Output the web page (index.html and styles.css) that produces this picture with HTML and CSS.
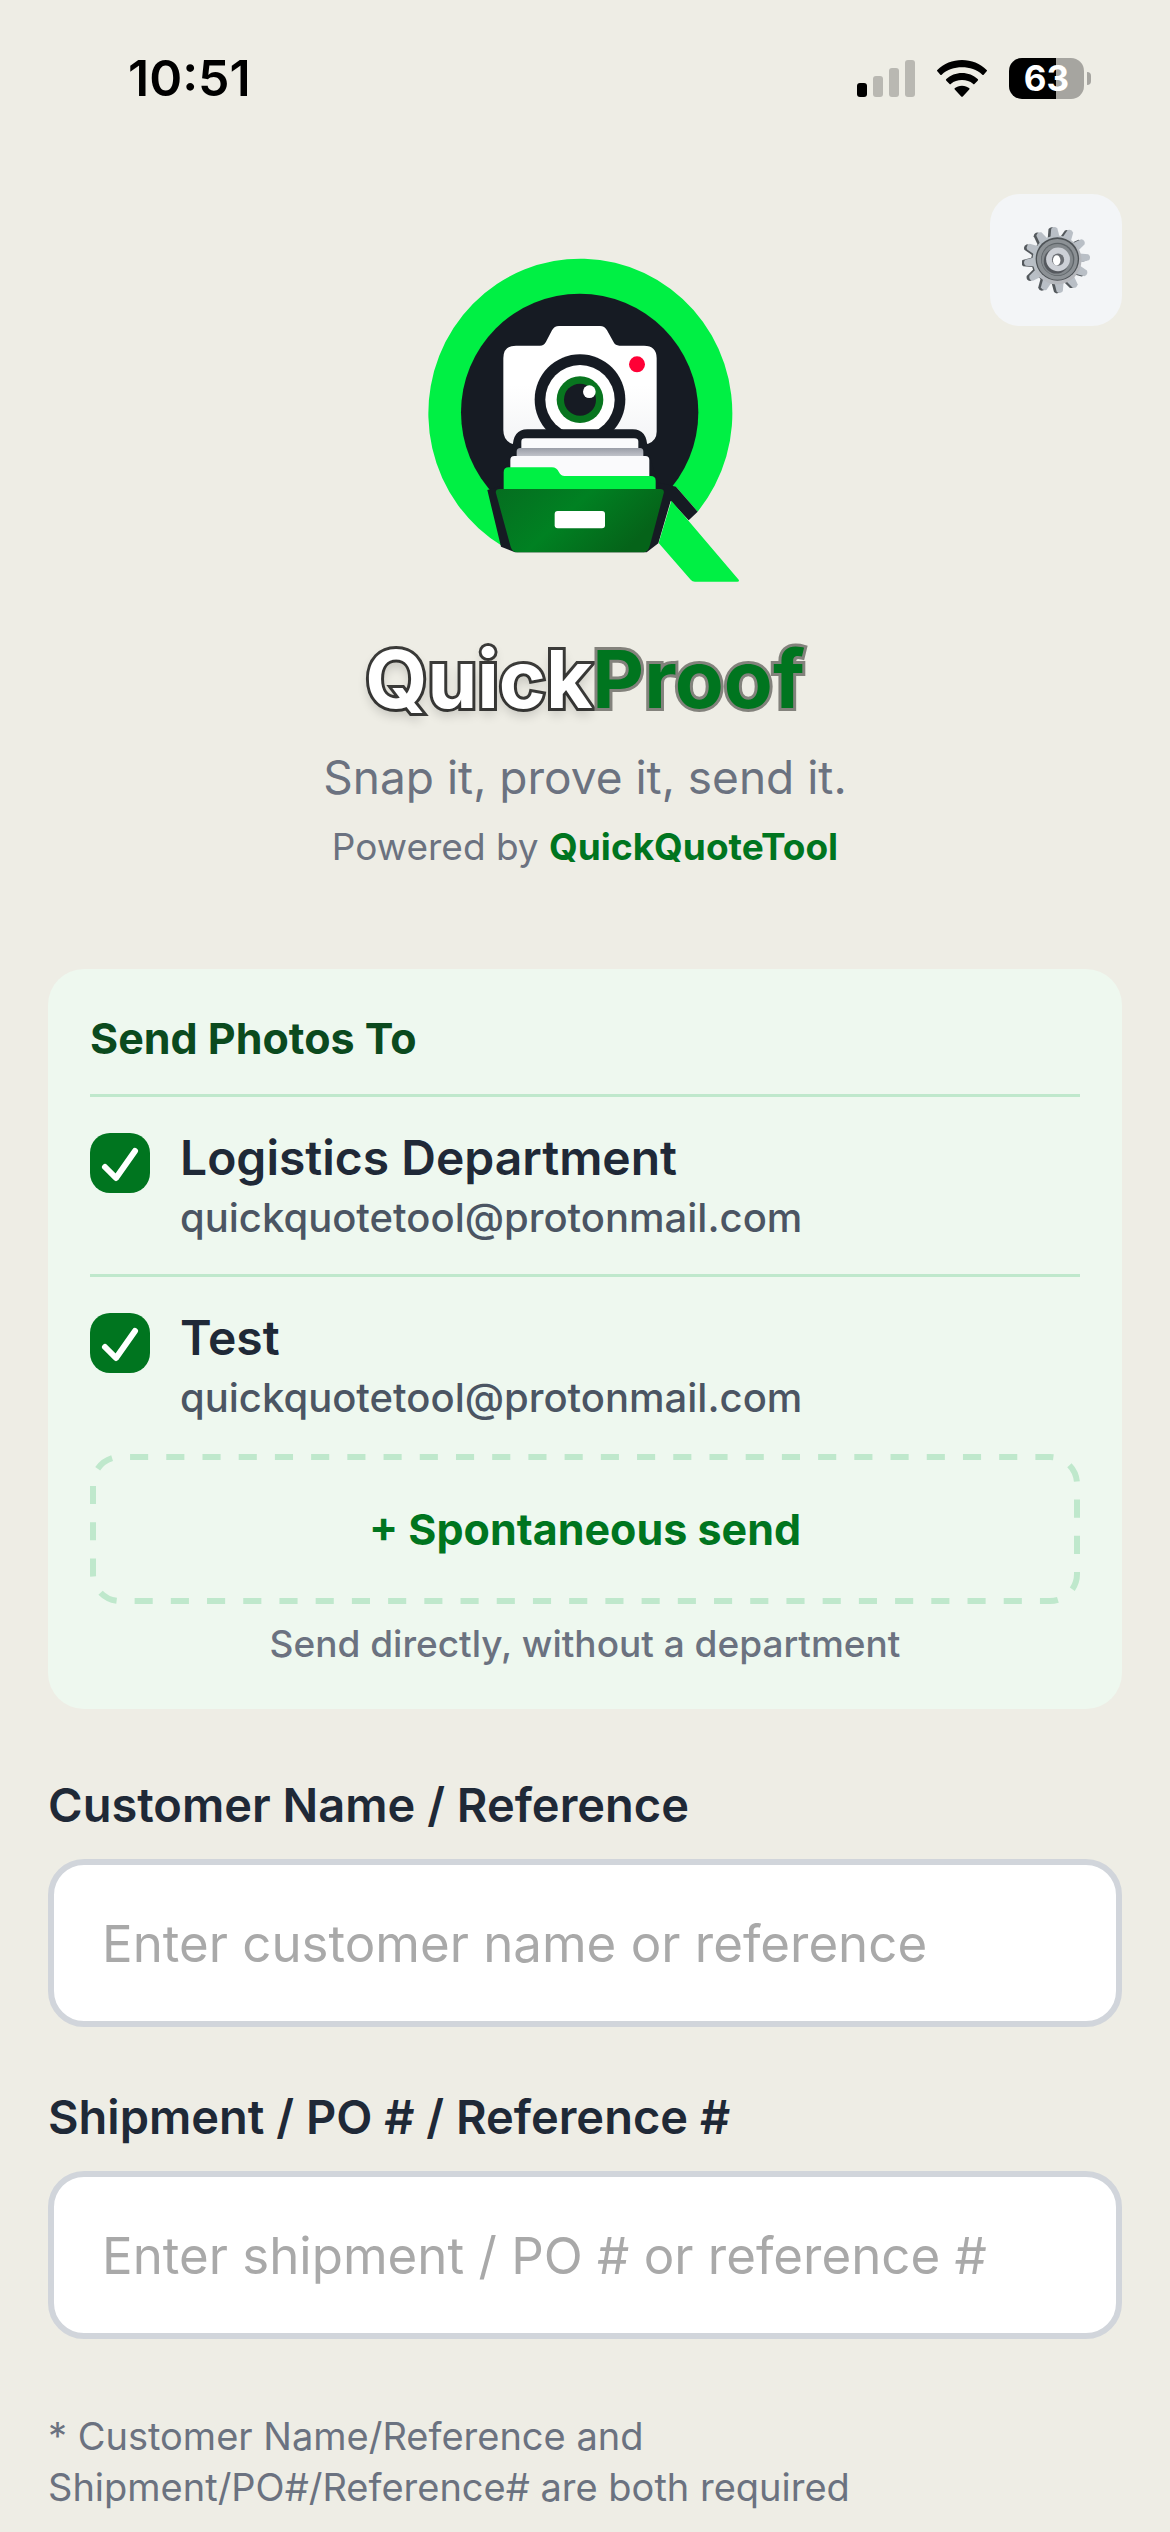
FILE: index.html
```html
<!DOCTYPE html>
<html lang="en">
<head>
    <meta charset="UTF-8">
    <meta name="viewport" content="width=device-width, initial-scale=1">
    <title>QuickProof</title>
    <link rel="stylesheet" href="styles.css">
</head>
<body>
<div class="status">
    <span class="time">10:51</span>
    <div class="status-icons">
        <svg class="signal" viewBox="0 0 58 37" aria-hidden="true">
            <rect x="0" y="23" width="10" height="14" rx="3"/>
            <g opacity="0.22">
                <rect x="16" y="16" width="10" height="21" rx="3"/>
                <rect x="32" y="8" width="10" height="29" rx="3"/>
                <rect x="48" y="0" width="10" height="37" rx="3"/>
            </g>
        </svg>
        <svg class="wifi" viewBox="0 0 150 111" aria-hidden="true">
            <path d="M75 0C103 0 130 11 149 30Q151 32 149 34L140 44Q138 46 136 44C119 29 98 22 75 22S31 29 14 44Q12 46 10 44L1 34Q-1 32 1 30C20 11 47 0 75 0Z"/>
            <path d="M75 39C93 39 110 46 122 57Q125 59 122 62L113 71Q110 74 108 71C99 64 88 60 75 60S51 64 42 71Q40 74 37 71L28 62Q25 59 28 57C40 46 57 39 75 39Z"/>
            <path d="M75 77C84 77 91 80 96 84Q99 86 96 89L78 109Q75 112 72 109L54 89Q51 86 54 84C59 80 66 77 75 77Z"/>
        </svg>
        <span class="battery">63</span>
    </div>
</div>

<div class="page">
    <header class="header">
        <svg class="logo" viewBox="75 75 960 990" role="img" aria-label="QuickProof logo">
            <defs>
                <linearGradient id="cam" x1="0" y1="0" x2="0" y2="1">
                    <stop offset="0.5" stop-color="#fff"/>
                    <stop offset="1" stop-color="#f3f4f6"/>
                </linearGradient>
                <linearGradient id="sheet" x1="0" y1="0" x2="0" y2="1">
                    <stop offset="0" stop-color="#9a9da7"/>
                    <stop offset="1" stop-color="#c6c8cf"/>
                </linearGradient>
                <linearGradient id="drawer" x1="0" y1="0" x2="1" y2="0.4">
                    <stop offset="0" stop-color="#056e20"/>
                    <stop offset="0.5" stop-color="#008122"/>
                    <stop offset="1" stop-color="#056319"/>
                </linearGradient>
            </defs>
            <!--ring and tail-->
            <path fill="#00f044" d="M310 950A456 464 0 1 1 893 845L828 770L540 900Z"/>
            <circle cx="539" cy="547" r="356" fill="#161b23"/>
            <path fill="#161b23" d="M828 770L893 845L866 871L812 813L775 940L740 967H345L303 950L262 780L540 700Z"/>
            <path fill="#00f044" d="M814 812L1016 1049Q1019 1055 1012 1055H885Q877 1055 872 1049L776 939Z"/>
            <!--camera-->
            <path fill="url(#cam)" d="M348 347H420Q432 347 438 335L456 301Q463 288 477 288H600Q614 288 621 301L641 337Q646 347 658 347H732Q770 347 770 385V605Q770 632 743 642L700 610H380L338 642Q310 632 310 600V385Q310 347 348 347Z"/>
            <circle cx="711" cy="403" r="24" fill="#ff0036"/>
            <circle cx="540" cy="509" r="136" fill="#161b23"/>
            <circle cx="540" cy="509" r="104" fill="#fff"/>
            <circle cx="540" cy="509" r="70" fill="#08751f"/>
            <circle cx="540" cy="509" r="48" fill="#161b23"/>
            <circle cx="568" cy="485" r="19" fill="#fff"/>
            <!--files in the drawer-->
            <path fill="#161b23" d="M338 655Q338 598 382 598H698Q742 598 742 655L780 780H295Z"/>
            <path fill="#fafafc" d="M364 656V635Q364 625 376 625H703Q715 625 715 635V656Z"/>
            <path fill="url(#sheet)" d="M350 682V665Q350 654 361 654H720Q730 654 730 665V682Z"/>
            <path fill="#fafafc" d="M331 740V690Q331 678 343 678H736Q748 678 748 690V740Z"/>
            <path fill="#00f044" d="M311 777V727Q311 712 326 712H456Q470 712 477 727Q482 738 494 738H752Q767 738 767 752V777Z"/>
            <path fill="url(#drawer)" d="M300 777H780Q794 777 791 790L750 945Q744 967 732 967H352Q337 967 332 950L288 790Q285 777 300 777Z"/>
            <rect x="464" y="843" width="151" height="52" rx="9" fill="#fff"/>
        </svg>
        <button class="settings" type="button" aria-label="Settings">
            <svg viewBox="0 0 200 200" aria-hidden="true">
                <defs>
                    <linearGradient id="steel" x1="0" y1="0" x2="1" y2="1">
                        <stop offset="0" stop-color="#b9c2c9"/>
                        <stop offset="1" stop-color="#b4b4b8"/>
                    </linearGradient>
                    <path id="tooth" d="M85 42L91 7Q100 -2 109 7L115 42Z"/>
                    <g id="teeth">
                        <use href="#tooth" transform="rotate(-5 100 100)"/>
                        <use href="#tooth" transform="rotate(25 100 100)"/>
                        <use href="#tooth" transform="rotate(55 100 100)"/>
                        <use href="#tooth" transform="rotate(85 100 100)"/>
                        <use href="#tooth" transform="rotate(115 100 100)"/>
                        <use href="#tooth" transform="rotate(145 100 100)"/>
                        <use href="#tooth" transform="rotate(175 100 100)"/>
                        <use href="#tooth" transform="rotate(205 100 100)"/>
                        <use href="#tooth" transform="rotate(235 100 100)"/>
                        <use href="#tooth" transform="rotate(265 100 100)"/>
                        <use href="#tooth" transform="rotate(295 100 100)"/>
                        <use href="#tooth" transform="rotate(325 100 100)"/>
                    </g>
                </defs>
                <g fill="#53585c" transform="translate(-5 1)">
                    <use href="#teeth"/>
                    <circle cx="100" cy="100" r="68"/>
                </g>
                <g fill="#b9bfc6" transform="translate(3 0)">
                    <use href="#teeth"/>
                    <circle cx="100" cy="100" r="72" fill="url(#steel)"/>
                </g>
                <circle cx="104" cy="97" r="64" fill="#4d5256"/>
                <circle cx="104" cy="98" r="60" fill="#8c9195"/>
                <circle cx="105" cy="98" r="49" fill="#5f6569"/>
                <circle cx="104" cy="99" r="46" fill="#84898d"/>
                <circle cx="101" cy="103" r="37" fill="#55595e"/>
                <circle cx="106" cy="98" r="35" fill="#cdd0d6"/>
                <circle cx="106" cy="99" r="18" fill="#6b6e73"/>
                <ellipse cx="102" cy="101" rx="11" ry="15" fill="#fff"/>
            </svg>
        </button>
    </header>

    <div class="intro">
        <h1 class="brand"><span class="quick">Quick</span><span class="proof">Proof</span></h1>
        <p class="tagline">Snap it, prove it, send it.</p>
        <p class="powered">Powered by <a href="#">QuickQuoteTool</a></p>
    </div>

    <section class="card">
        <h2>Send Photos To</h2>
        <label class="dept">
            <input type="checkbox" checked>
            <span class="dept-text">
                <span class="dept-name">Logistics Department</span>
                <span class="dept-mail">quickquotetool@protonmail.com</span>
            </span>
        </label>
        <label class="dept">
            <input type="checkbox" checked>
            <span class="dept-text">
                <span class="dept-name">Test</span>
                <span class="dept-mail">quickquotetool@protonmail.com</span>
            </span>
        </label>
        <button class="send" type="button">
            <svg class="dashes" aria-hidden="true"><rect pathLength="2196"/></svg>
            + Spontaneous send
        </button>
        <p class="hint">Send directly, without a department</p>
    </section>

    <form class="form">
        <div class="field">
            <label for="customer">Customer Name / Reference</label>
            <input id="customer" type="text" placeholder="Enter customer name or reference">
        </div>
        <div class="field">
            <label for="shipment">Shipment / PO # / Reference #</label>
            <input id="shipment" type="text" placeholder="Enter shipment / PO # or reference #">
        </div>
        <p class="note">* Customer Name/Reference and<br>Shipment/PO#/Reference# are both required</p>
    </form>
</div>
</body>
</html>
```
FILE: styles.css
```css
* {
    margin: 0;
    padding: 0;
    box-sizing: border-box;
}

body {
    background-color: #eeede5;
    color: #1f2937;
    font-family: Inter, "Liberation Sans", sans-serif;
}

button, input {
    font-family: inherit;
}

svg {
    display: block;
}

/* status bar */
.status {
    display: flex;
    align-items: center;
    justify-content: space-between;
    height: 156px;
    padding: 0 86px 0 128px;
    color: #000;
}

.time {
    font-size: 50px;
    font-weight: 600;
}

.status-icons {
    display: flex;
    align-items: center;
    gap: 22px;
}

.signal {
    width: 58px;
    height: 37px;
}

.wifi {
    width: 50px;
    height: 37px;
}

.battery {
    position: relative;
    width: 75px;
    height: 41px;
    border-radius: 13px;
    background: linear-gradient(to right, #000 63%, #a6a5a0 63%);
    color: #fff;
    font-size: 35px;
    font-weight: 700;
    line-height: 41px;
    text-align: center;
}

.battery::after {
    content: "";
    position: absolute;
    top: 14px;
    right: -7px;
    width: 4px;
    height: 13px;
    border-radius: 0 4px 4px 0;
    background-color: #a6a5a0;
}

/* page */
.page {
    padding: 38px 48px 0;
}

.header {
    display: grid;
    grid-template-columns: 132px 1fr 132px;
    align-items: start;
}

.logo {
    grid-column: 2;
    justify-self: center;
    width: 320px;
    height: 330px;
    margin-top: 61px;
}

.settings {
    display: flex;
    align-items: center;
    justify-content: center;
    width: 132px;
    height: 132px;
    border: none;
    border-radius: 30px;
    background-color: #f3f5f7;
}

.settings svg {
    width: 68px;
    height: 68px;
}

.intro {
    margin-top: 46px;
    text-align: center;
}

.brand {
    font-size: 80px;
    font-weight: 700;
    line-height: 96px;
}

.quick {
    color: #fff;
    -webkit-text-stroke: 6px #3c3c3a;
    paint-order: stroke fill;
    text-shadow: 0 6px 12px rgba(0, 0, 0, 0.2);
}

.proof {
    color: #00751f;
    -webkit-text-stroke: 6px #83827c;
    paint-order: stroke fill;
}

.tagline {
    margin-top: 20px;
    color: #6b7280;
    font-size: 46px;
    line-height: 60px;
}

.powered {
    margin-top: 16px;
    color: #6b7280;
    font-size: 37px;
    line-height: 48px;
}

.powered a {
    color: #00751f;
    font-weight: 700;
    text-decoration: none;
}

/* recipients */
.card {
    margin-top: 98px;
    padding: 45px 42px 41px;
    border-radius: 36px;
    background-color: #eef8ef;
}

.card h2 {
    padding-bottom: 32px;
    color: #0b4a1e;
    font-size: 43px;
    font-weight: 700;
    line-height: 48px;
}

.dept {
    display: flex;
    gap: 30px;
    padding: 33px 0 32px;
    border-top: 3px solid #bfe8cc;
}

.dept input {
    appearance: none;
    flex: none;
    width: 60px;
    height: 60px;
    margin-top: 3px;
    border-radius: 20px;
}

.dept input:checked {
    background: #00751f url("data:image/svg+xml,%3Csvg xmlns='http://www.w3.org/2000/svg' viewBox='0 0 60 60'%3E%3Cpath d='M15 34L26 45L45 18' fill='none' stroke='white' stroke-width='6' stroke-linecap='round' stroke-linejoin='round'/%3E%3C/svg%3E") center / 60px 60px no-repeat;
}

.dept-text {
    display: flex;
    flex-direction: column;
    gap: 8px;
}

.dept-name {
    font-size: 48px;
    font-weight: 600;
    line-height: 56px;
}

.dept-mail {
    color: #4b5563;
    font-size: 40px;
    font-weight: 500;
    line-height: 48px;
}

.send {
    position: relative;
    display: block;
    width: 100%;
    height: 150px;
    border: none;
    background: none;
    color: #00751f;
    font-size: 43px;
    font-weight: 700;
}

.dashes {
    position: absolute;
    top: 0;
    left: 0;
    width: 100%;
    height: 100%;
}

.dashes rect {
    x: 3px;
    y: 3px;
    width: calc(100% - 6px);
    height: calc(100% - 6px);
    rx: 27px;
    fill: none;
    stroke: #bfe8cc;
    stroke-width: 6px;
    stroke-dasharray: 18 18;
    stroke-dashoffset: -10;
}

.hint {
    margin-top: 16px;
    color: #6b7280;
    font-size: 37px;
    font-weight: 500;
    line-height: 48px;
    text-align: center;
}

/* form */
.form {
    margin-top: 68px;
}

.field {
    margin-bottom: 62px;
}

.field label {
    display: block;
    margin-bottom: 26px;
    font-size: 47px;
    font-weight: 600;
    line-height: 56px;
}

.field input {
    display: block;
    width: 100%;
    height: 168px;
    padding: 0 48px;
    border: 6px solid #d1d5db;
    border-radius: 36px;
    background-color: #fff;
    color: #1f2937;
    font-size: 51px;
}

.field input::placeholder {
    color: #a9a9a9;
}

.note {
    margin-top: 72px;
    color: #6b7280;
    font-size: 38px;
    line-height: 51px;
}
```
